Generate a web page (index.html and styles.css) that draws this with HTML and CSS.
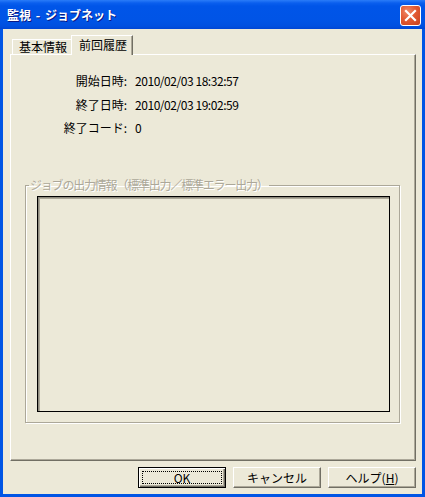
FILE: index.html
```html
<!DOCTYPE html>
<html lang="ja">
<head>
<meta charset="utf-8">
<title>監視 - ジョブネット</title>
<link rel="stylesheet" href="styles.css">
</head>
<body>
<div class="window">
  <div class="titlebar">
    <span class="title">監視 - ジョブネット</span>
    <span class="close">
      <svg width="21" height="21" viewBox="0 0 21 21">
        <path d="M6 6 L15 15 M15 6 L6 15" stroke="#fff" stroke-width="2.2" stroke-linecap="square"/>
      </svg>
    </span>
  </div>
  <div class="client">
    <div class="tabs">
      <div class="tab">基本情報</div>
      <div class="tab active">前回履歴</div>
    </div>
    <div class="panel">
      <div class="info">
        <span class="label">開始日時:</span><span class="value">2010/02/03 18:32:57</span>
        <span class="label">終了日時:</span><span class="value">2010/02/03 19:02:59</span>
        <span class="label">終了コード:</span><span class="value">0</span>
      </div>
      <fieldset class="group">
        <legend class="group-title">ジョブの出力情報（標準出力／標準エラー出力）</legend>
        <div class="output"></div>
      </fieldset>
    </div>
    <div class="buttons">
      <button class="btn default"><span class="focus">OK</span></button>
      <button class="btn"><span class="plain">キャンセル</span></button>
      <button class="btn"><span class="plain">ヘルプ(<u>H</u>)</span></button>
    </div>
  </div>
</div>
</body>
</html>
```

FILE: styles.css
```css
* { box-sizing: border-box; }
html, body {
  margin: 0;
  padding: 0;
  background: #ECE9D8;
}
body {
  font-family: "MS UI Gothic", "Noto Sans CJK JP", sans-serif;
  font-size: 12px;
  color: #000;
}
.window {
  width: 425px;
  height: 497px;
  display: flex;
  flex-direction: column;
}
.titlebar {
  height: 29px;
  flex: none;
  display: flex;
  align-items: center;
  justify-content: space-between;
  padding: 0 4px 0 7px;
  background: linear-gradient(#2A7CF8 0, #0A5FEE 3px, #0055E8 6px, #0054E6 20px, #0050E0 26px, #0046D4 29px);
}
.title {
  color: #fff;
  font-weight: bold;
  font-size: 12px;
  line-height: 14px;
  text-shadow: 1px 1px 0 #0A1883;
  margin-top: 1px;
  word-spacing: 2px;
}
.close {
  width: 21px;
  height: 21px;
  display: block;
  margin-top: 2px;
  border: 1px solid #fff;
  border-radius: 3px;
  background: radial-gradient(circle at 35% 30%, #F08A6A 0, #E25A33 45%, #C8401C 100%);
}
.close svg { display: block; margin: -1px; }
.client {
  flex: 1;
  display: flex;
  flex-direction: column;
  border: 3px solid #0055E5;
  border-top: 0;
  padding: 6px 6px 6px 7px;
}
.tabs {
  height: 19px;
  display: flex;
  align-items: flex-end;
  padding-left: 2px;
  flex: none;
}
.tab {
  height: 15px;
  line-height: 14px;
  padding: 0 5px 0 6px;
  width: 59px;
  border-left: 1px solid #fff;
  border-top: 1px solid #fff;
  white-space: nowrap;
}
.tab.active {
  width: 62px;
  height: 20px;
  margin-bottom: -1px;
  padding: 2px 0 0 7px;
  background: #ECE9D8;
  border-right: 1px solid #716F64;
  box-shadow: inset -1px 0 #ACA899;
  position: relative;
  z-index: 1;
}
.panel {
  height: 407px;
  flex: none;
  border-left: 1px solid #fff;
  border-top: 1px solid #fff;
  border-right: 1px solid #716F64;
  border-bottom: 1px solid #716F64;
  box-shadow: inset -1px -1px #ACA899;
  padding-top: 14px;
}
.info {
  display: grid;
  grid-template-columns: 116px auto;
  grid-auto-rows: 23.5px;
  column-gap: 8px;
  align-items: center;
}
.label {
  text-align: right;
  white-space: nowrap;
}
.value {
  white-space: nowrap;
  letter-spacing: -0.45px;
}
.group {
  margin: 38.5px 15px 0 14px;
  padding: 4px 9px 10px 11px;
  border: 1px solid #ACA899;
  box-shadow: inset 1px 1px #fff, 1px 1px #fff;
  min-width: 0;
}
.group-title {
  margin-left: -8px;
  padding: 0 1px;
  height: 14px;
  line-height: 14px;
  color: #ACA899;
  text-shadow: 1px 1px 0 #fff;
  letter-spacing: -1.2px;
  white-space: nowrap;
}
.output {
  height: 216px;
  border: 1px solid #000;
  box-shadow: inset 1px 1px #8E8B7E, inset 2px 2px #ACA899;
}
.buttons {
  margin-top: 6px;
  display: flex;
  justify-content: flex-end;
  gap: 7px;
  flex: none;
}
.btn {
  width: 88px;
  height: 21px;
  margin: 0;
  padding: 0;
  font: inherit;
  color: #000;
  background: #ECE9D8;
  border: 1px solid;
  border-color: #fff #716F64 #716F64 #fff;
  box-shadow: inset -1px -1px #ACA899;
  display: flex;
  align-items: stretch;
}
.btn.default {
  border: 1px solid #000;
  box-shadow: inset 1px 1px #fff, inset -1px -1px #716F64, inset -2px -2px #ACA899;
  padding: 3px;
}
.focus {
  flex: 1;
  border: 1px dotted #000;
  display: flex;
  align-items: center;
  justify-content: center;
  line-height: 12px;
}
.plain {
  flex: 1;
  display: flex;
  align-items: center;
  justify-content: center;
  line-height: 12px;
}
```
